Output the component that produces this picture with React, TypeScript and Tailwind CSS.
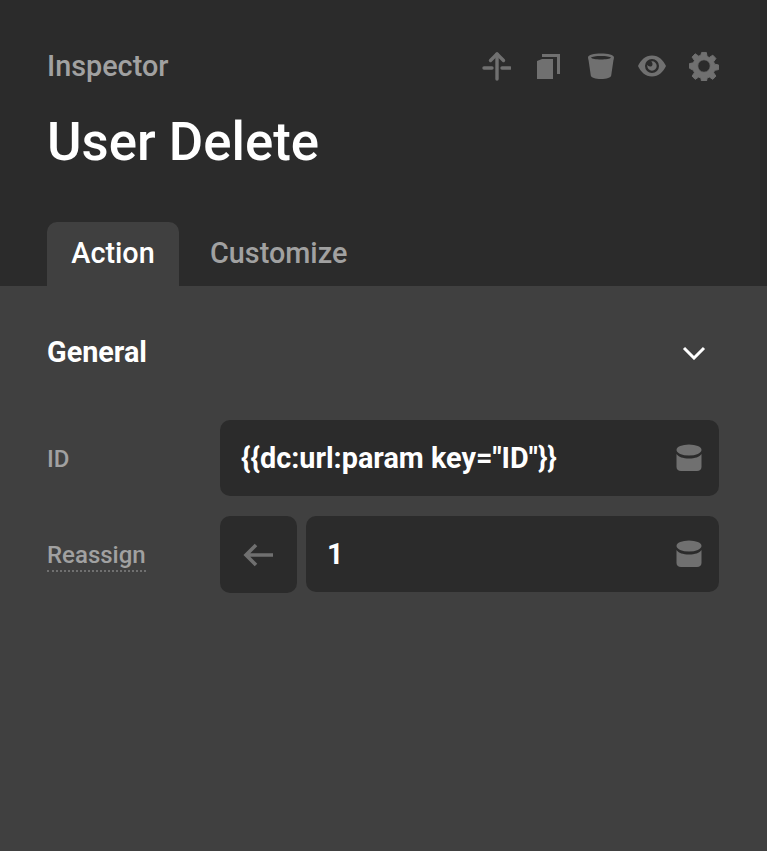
import React from 'react';

const iconClass = 'w-[30px] h-[30px] text-[#707070]';

const PositionIcon = () => (
  <svg viewBox="0 0 30 30" className={iconClass} fill="none" stroke="currentColor" strokeWidth={3.400} strokeLinecap="round" strokeLinejoin="round">
    <path d="M16 3v25" />
    <path d="M9.500 9.500 16 3l6.500 6.500" />
    <path d="M3 17h8M21 17h8" />
  </svg>
);

const CopyIcon = () => (
  <svg viewBox="0 0 30 30" className={iconClass}>
    <path fill="currentColor" d="M4 10 9 8h11v20H4z" />
    <path fill="none" stroke="currentColor" strokeWidth={3} d="M9 4.500h16.500V23" />
  </svg>
);

const BucketIcon = () => (
  <svg viewBox="0 0 30 30" className={iconClass} fill="currentColor">
    <path fillRule="evenodd" d="M16 2.500c7 0 13 1.200 13 4 0 1-.4 2-.6 3l-2.200 15c-.3 2.200-4.500 3.500-10.200 3.500S6.100 26.700 5.800 24.500L3.600 9.500c-.2-1-.6-2-.6-3 0-2.800 6-4 13-4Zm0 2.500c-5 0-9 .7-10 1.700 1 1 5 1.700 10 1.700s9-.7 10-1.700c-1-1-5-1.700-10-1.700Z" />
  </svg>
);

const EyeIcon = () => (
  <svg viewBox="0 0 30 30" className={iconClass} fill="currentColor">
    <path fillRule="evenodd" d="M15 4.500c6.500 0 11.500 4.700 14 10.500-2.500 5.800-7.500 10.500-14 10.500S3.500 20.800 1 15C3.500 9.200 8.500 4.500 15 4.500Zm0 3.500a7 7 0 1 0 0 14 7 7 0 0 0 0-14Zm0 2.300a4.700 4.700 0 1 1-4.700 4.700c0-.4 0-.8.200-1.200.4 1 1.300 1.700 2.400 1.700a2.600 2.600 0 0 0 2.600-2.600c0-1-.6-1.800-1.400-2.100l.9-.5Z" />
  </svg>
);

const GearIcon = () => (
  <svg viewBox="-0.500 -0.500 31 31" className={iconClass} fill="currentColor" stroke="currentColor" strokeWidth={1} strokeLinejoin="round">
    <path fillRule="evenodd" d="M12.600 1h4.800l.8 4.200 2.300 1 3.600-2.400 3.200 3.400-2.400 3.500 1 2.400 4.100.8v4.800l-4.100.8-1 2.400 2.400 3.500-3.200 3.400-3.600-2.400-2.300 1-.8 4.200h-4.800l-.8-4.200-2.300-1-3.600 2.400-3.200-3.400 2.400-3.500-1-2.400L0 17.300v-4.800l4.100-.8 1-2.400-2.400-3.500 3.200-3.400 3.600 2.400 2.300-1ZM15 8.500a6.500 6.500 0 1 0 0 13 6.500 6.500 0 0 0 0-13Z" />
  </svg>
);

const DynamicIcon = () => (
  <svg viewBox="0 0 26 28" className="w-[26px] h-[28px] text-[#707070]" fill="currentColor">
    <ellipse cx="13" cy="6" rx="12.500" ry="5.500" />
    <path d="M.5 10c2 3 6.500 4.500 12.500 4.500S23.500 13 25.500 10v13c0 2.500-2 4-4.500 4H5c-2.500 0-4.500-1.500-4.500-4z" />
  </svg>
);

const Field = ({ value }: { value: string }) => (
  <div className="flex-1 h-[76px] rounded-[10px] bg-[#2b2b2b] flex items-center justify-between pl-[21px] pr-[17px]">
    <span className="pt-[1px] text-[28.8px] font-bold text-white">{value}</span>
    <DynamicIcon />
  </div>
);

export default function App() {
  return (
    <div className="w-[767px] h-[851px] flex flex-col bg-[#404040] antialiased font-['Roboto',sans-serif]">
      <header className="h-[286px] bg-[#2b2b2b] flex flex-col justify-between pl-[47px] pr-[48px]">
        <div>
          <div className="flex items-center justify-between pt-[51px]">
            <span className="text-[28.8px] leading-[30px] font-medium text-[#a1a1a1]">Inspector</span>
            <div className="flex items-center gap-[22px]">
              <PositionIcon />
              <CopyIcon />
              <BucketIcon />
              <EyeIcon />
              <GearIcon />
            </div>
          </div>
          <h1 className="mt-[31px] text-[52.800px] leading-[60px] font-medium text-white">User Delete</h1>
        </div>
        <div className="flex items-end">
          <div className="w-[132px] h-[64px] rounded-t-[10px] bg-[#404040] flex items-center justify-center text-[28.8px] font-medium text-white">
            Action
          </div>
          <div className="h-[64px] ml-[31px] flex items-center text-[28.8px] font-medium text-[#a1a1a1]">Customize</div>
        </div>
      </header>
      <main className="flex-1 pl-[47px] pr-[48px]">
        <div className="h-[134px] flex items-center justify-between">
          <span className="text-[28.8px] font-bold text-white">General</span>
          <svg viewBox="0 0 24 14" className="w-[24px] h-[14px] mr-[13px] text-white" fill="none" stroke="currentColor" strokeWidth={3}>
            <path d="M2 2l10 10L22 2" />
          </svg>
        </div>
        <div className="flex items-center">
          <span className="w-[173px] pt-[2px] text-[24px] font-medium text-[#a1a1a1]">ID</span>
          <Field value={'{{dc:url:param key="ID"}}'} />
        </div>
        <div className="flex items-start mt-[20px]">
          <div className="w-[173px] h-[77px] flex items-center pt-[2px]">
            <span className="text-[24px] leading-[30px] font-medium text-[#a1a1a1] border-b-2 border-dotted border-[#707070]">Reassign</span>
          </div>
          <div className="w-[77px] h-[77px] mr-[9px] rounded-[10px] bg-[#2b2b2b] flex items-center justify-center">
            <svg viewBox="0 0 30 24" className="w-[30px] h-[24px] mr-[1px] text-[#707070]" fill="none" stroke="currentColor" strokeWidth={3.600}>
              <path d="M30 12H3M13 2 3 12l10 10" />
            </svg>
          </div>
          <Field value="1" />
        </div>
      </main>
    </div>
  );
}
